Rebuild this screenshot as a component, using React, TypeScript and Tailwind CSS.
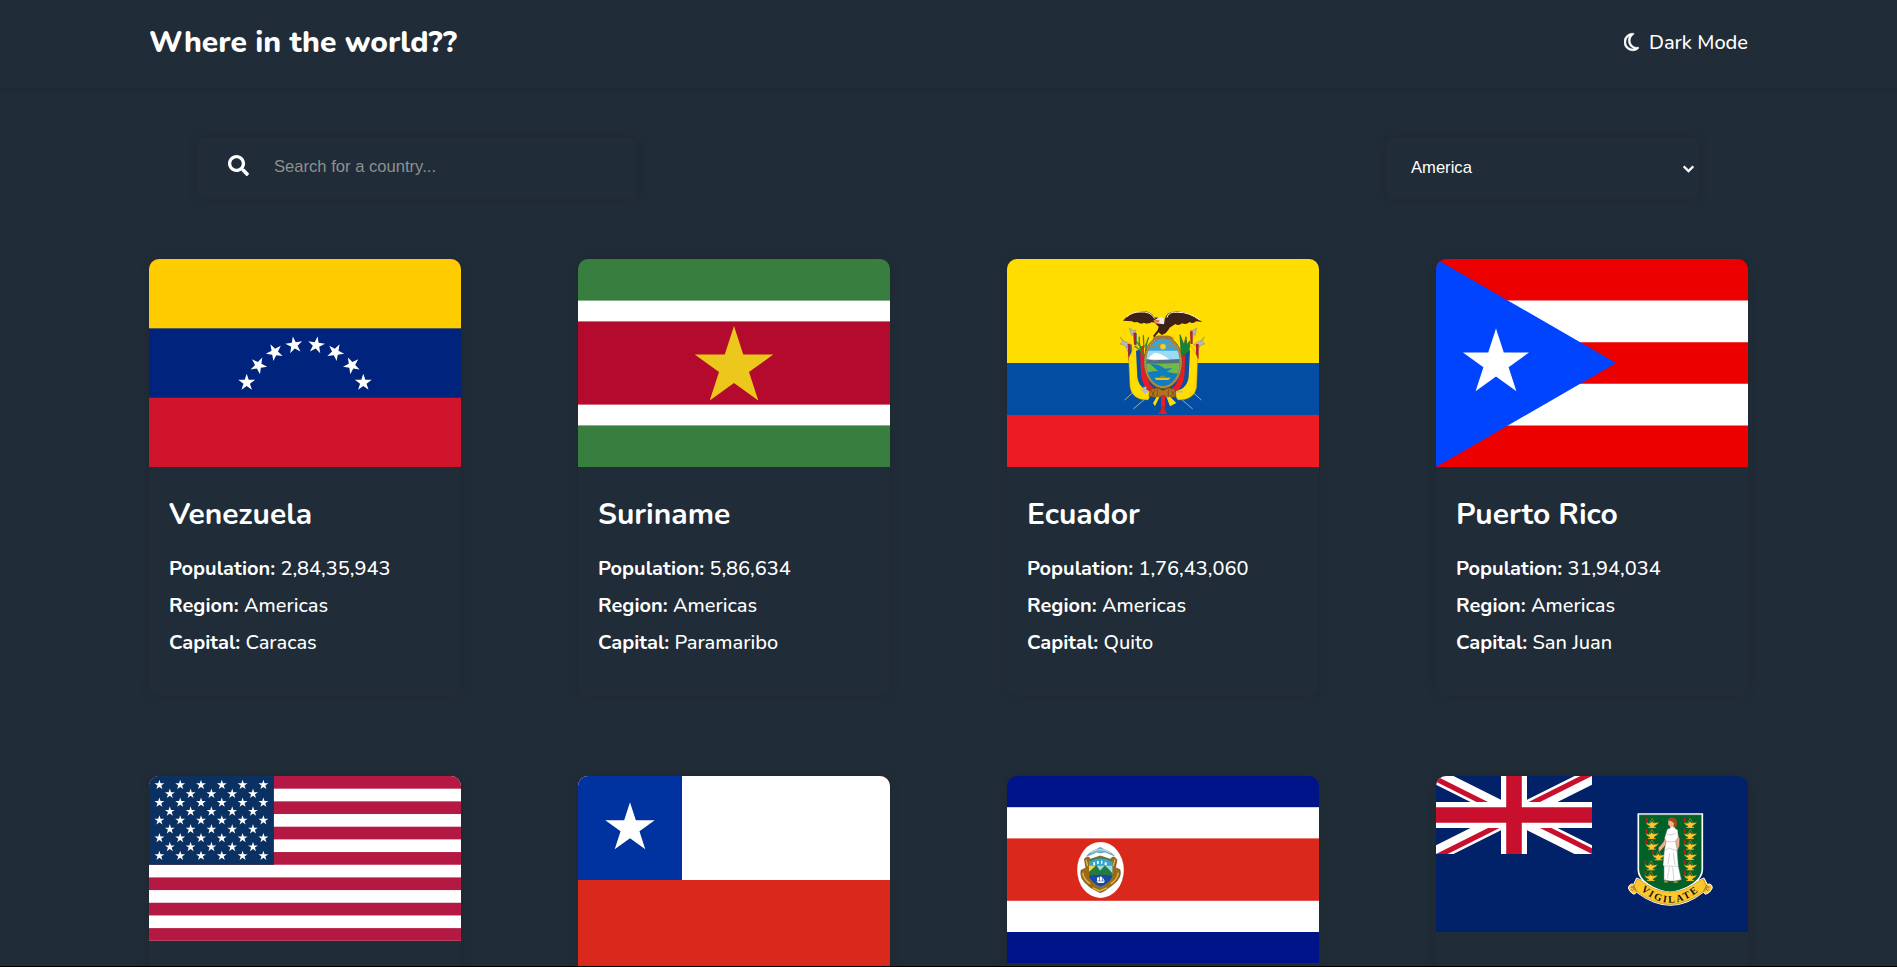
import type { ReactNode } from "react";
import { FaSearch } from "react-icons/fa";
import { FaRegMoon } from "react-icons/fa6";

const STAR_POINTS = Array.from({ length: 10 }, (_, i) => {
  const r = i % 2 === 0 ? 1 : 0.382;
  const a = (Math.PI / 5) * i;
  return `${(r * Math.sin(a)).toFixed(4)},${(-r * Math.cos(a)).toFixed(4)}`;
}).join(" ");

type StarProps = { x: number; y: number; r: number; rot?: number; fill?: string };

function Star({ x, y, r, rot = 0, fill = "#fff" }: StarProps) {
  return <polygon points={STAR_POINTS} fill={fill} transform={`translate(${x} ${y}) rotate(${rot}) scale(${r})`} />;
}

function Flag({ height, children }: { height: number; children: ReactNode }) {
  return (
    <svg className="block w-full rounded-t-[10px]" viewBox={`0 0 312 ${height}`} aria-hidden="true">
      {children}
    </svg>
  );
}

const VENEZUELA_STARS: [number, number, number][] = [
  [97.7, 123.6, 0],
  [109.4, 106.4, 26],
  [125.6, 93.2, -28],
  [145.2, 86.2, -9],
  [167.2, 86.2, 9],
  [186.4, 93.2, 28],
  [202.8, 106.4, -26],
  [214.3, 123.6, 0],
];

function Venezuela() {
  return (
    <Flag height={208}>
      <rect width="312" height="208" fill="#cf142b" />
      <rect width="312" height="138.67" fill="#00247d" />
      <rect width="312" height="69.33" fill="#fc0" />
      {VENEZUELA_STARS.map(([x, y, rot]) => (
        <Star key={x} x={x} y={y} r={8.9} rot={rot} />
      ))}
    </Flag>
  );
}

function Suriname() {
  return (
    <Flag height={208}>
      <rect width="312" height="208" fill="#377e3f" />
      <rect y="41.6" width="312" height="124.8" fill="#fff" />
      <rect y="62.4" width="312" height="83.2" fill="#b40a2d" />
      <Star x={156} y={108.2} r={41.3} fill="#ecc81d" />
    </Flag>
  );
}

function Ecuador() {
  return (
    <Flag height={208}>
      <rect width="312" height="208" fill="#ed1c24" />
      <rect width="312" height="156" fill="#034ea2" />
      <rect width="312" height="104" fill="#fd0" />
      <g transform="translate(83 31) scale(.3333)">
        <g stroke="#a9a9ad" strokeWidth="3" fill="none">
          <path d="M104 330L127 309M130 357L166 326M334 330L311 309M308 357L272 326" />
          <path d="M122 208L100 150M318 208L334 150M136 160L124 118M304 160L314 118" />
        </g>
        <g fill="#b4b6ba" stroke="#6b6d72" strokeWidth="1">
          <path d="M90 140l10 12 14 6 10 6-10 10-12-8-12-4 8-8zM343 140l-10 12-14 6-8 6 10 10 12-8 12-4-8-8zM118 114l12 8 8-2-2 12-12 4zM320 114l-12 8-6-2 2 12 12 4z" />
        </g>
        <path d="M113 162h8v46l-6 4zM318 162h8v46l-8-4zM130 128h8v36h-6zM300 124h8v38h-6z" fill="#b5202a" />
        <path d="M121 164h4v46l-6 2zM137 130h3v34h-4z" fill="#174b98" />
        <path d="M116 204L125 186Q131 164 150 166L158 240Q164 290 190 300L174 330Q126 330 120 290ZM323 204L315 186Q306 164 290 166L280 240Q274 290 246 300L264 330Q314 330 320 290Z" fill="#fd0" stroke="#ad9322" strokeWidth="1.5" />
        <path d="M138 182L158 176Q160 250 178 290L190 304Q148 302 142 262ZM300 182L278 176Q278 250 260 290L248 304Q290 302 296 262Z" fill="#0b50a0" />
        <path d="M150 170L162 166Q160 250 182 286L212 312H190Q158 298 153 250ZM286 170L276 166Q278 250 256 286L226 312H248Q280 298 284 250Z" fill="#ed1c24" />
        <g stroke="#3b8427" strokeWidth="4" fill="none">
          <path d="M166 202Q144 176 148 140M160 188L134 168M158 178L137 152M162 174L160 136M166 170L176 142M166 184L172 152" />
        </g>
        <path d="M274 200L270 134L282 164L288 140L291 164L300 152L297 184Z" fill="#14833c" stroke="#1f6428" strokeWidth="2" />
        <ellipse cx="219" cy="217" rx="58" ry="79" fill="#a77b38" stroke="#684a20" strokeWidth="2" />
        <ellipse cx="219" cy="217" rx="54" ry="75" fill="none" stroke="#dac391" strokeWidth="2" strokeDasharray="3 3" />
        <clipPath id="ecuador-oval"><ellipse cx="219" cy="217" rx="50" ry="71" /></clipPath>
        <g clipPath="url(#ecuador-oval)">
          <path d="M160 140h120v160H160z" fill="#37a4dd" />
          <path d="M160 182h120v35H160z" fill="#9bdcf4" />
          <path d="M174 208Q190 185 200 189Q215 191 239 209Z" fill="#fff" />
          <path d="M160 206L190 211L225 209L280 207V229H160Z" fill="#51717a" />
          <path d="M160 220L210 221L280 219V268H160Z" fill="#72b94a" />
          <path d="M180 221L206 225L226 236L248 234L230 245L252 250L280 251V300H160V250L190 244L204 243Z" fill="#127dbc" />
          <path d="M193 263H242L235 270H199Z" fill="#e7bd25" />
          <path d="M210 257h15v6h-15z" fill="#6a9e3a" />
          <path d="M183 174Q219 154 255 174" stroke="#b18b3a" strokeWidth="6" fill="none" strokeDasharray="7 3" />
          <circle cx="219" cy="170" r="9" fill="#efcf28" stroke="#a98f29" />
        </g>
        <path d="M187 146Q201 131 219 140Q238 130 252 147L236 149L219 143L202 150Z" fill="#a77434" />
        <path d="M189 138L203 120L206 110L196 100L186 96Q172 104 162 98Q151 104 143 96Q130 99 126 94L99 92Q118 67 148 65Q180 60 193 82L209 84L224 88Q231 64 252 65Q292 60 337 96L319 94Q308 103 299 96Q288 106 276 100Q266 109 256 102L239 113Q230 131 215 135L206 127L193 142Z" fill="#3d2117" />
        <path d="M110 81Q126 66 150 66Q182 63 194 86M231 83Q234 64 263 67Q298 66 329 90" stroke="#fff3d7" strokeWidth="3" fill="none" />
        <path d="M204 84Q216 78 224 88L222 103L210 101L194 99L191 92Z" fill="#eee7e2" />
        <path d="M191 91L208 89L208 97L192 99Z" fill="#dd7445" />
        <path d="M180 298L202 293L219 301L235 293L257 298V320L234 325L219 317L202 324L177 319Z" fill="#ae7422" stroke="#67420e" strokeWidth="2" />
        <path d="M183 300L195 322M195 298L185 320M202 295V323M235 297V323M243 300L254 318M255 300L242 322" stroke="#6e4514" strokeWidth="2" />
        <path d="M208 322L195 349L189 339L200 321ZM230 322L240 349L259 339L241 321Z" fill="#fd0" />
        <path d="M213 316h12l1 40 5 16h-25l7-16z" fill="#e51f2a" />
        <path d="M211 368l6-20M226 368l-5-20" stroke="#84232d" strokeWidth="2" />
        <path d="M149 296L160 300L160 290L170 290L169 300L179 304L165 312Z" fill="#b5b9c1" />
        <path d="M258 305h20" stroke="#b5b9c1" strokeWidth="5" />
        <path d="M226 82L248 30M239 75L259 33" stroke="#c2aa10" strokeWidth="1" strokeDasharray="3 4" />
      </g>
    </Flag>
  );
}

function PuertoRico() {
  return (
    <Flag height={208}>
      <rect width="312" height="208" fill="#ed0000" />
      <path d="M0 41.6h312v41.6H0zM0 124.8h312v41.6H0z" fill="#fff" />
      <path d="M0 0L180.1 104L0 208z" fill="#0044ff" />
      <Star x={60} y={104.2} r={34.7} />
    </Flag>
  );
}

function UnitedStates() {
  const h = 164.8;
  const stripe = h / 13;
  const rows = [0, 1, 2, 3, 4, 5, 6, 7, 8];
  return (
    <Flag height={h}>
      <rect width="312" height={h} fill="#fff" />
      {[0, 2, 4, 6, 8, 10, 12].map((i) => (
        <rect key={i} y={i * stripe} width="312" height={stripe} fill="#b31942" />
      ))}
      <rect width="124.9" height={stripe * 7} fill="#0a3161" />
      {rows.flatMap((row) =>
        Array.from({ length: row % 2 ? 5 : 6 }, (_, c) => (
          <Star key={`${row}-${c}`} x={10.4 + (row % 2 ? 10.4 : 0) + c * 20.8} y={8.9 + row * 8.87} r={5.2} />
        )),
      )}
    </Flag>
  );
}

function Chile() {
  return (
    <Flag height={208}>
      <rect width="312" height="208" fill="#da291c" />
      <rect width="312" height="104" fill="#fff" />
      <rect width="104" height="104" fill="#0032a0" />
      <Star x={52} y={52.2} r={26} />
    </Flag>
  );
}

function CostaRica() {
  return (
    <Flag height={187.2}>
      <rect width="312" height="187.2" fill="#001489" />
      <rect y="31.2" width="312" height="124.8" fill="#fff" />
      <rect y="62.4" width="312" height="62.4" fill="#da291c" />
      <g transform="translate(43 44) scale(.3333)">
        <ellipse cx="151.500" cy="150" rx="70" ry="84" fill="#fff" />
        <path d="M110 108Q125 91 138 89L151 82L163 89Q178 92 193 107L181 103L165 96L151 99L139 96L123 104Z" fill="#6fb5cf" stroke="#44798c" strokeWidth="1.5" />
        <path d="M122 98Q151 80 181 98" stroke="#b8dbe5" strokeWidth="4" fill="none" />
        <path d="M103 117Q116 105 121 118L151 108L181 118Q190 104 201 119L196 143L210 149Q216 173 190 193Q173 206 164 212L151 218L139 212Q119 203 112 194Q89 177 93 151L108 144Z" fill="#9b6b16" stroke="#694411" strokeWidth="2" />
        <path d="M98 158Q101 179 120 191M205 158Q202 180 182 191M108 120L113 138M195 119L189 138M128 204L149 213L171 204" stroke="#dbb55c" strokeWidth="4" fill="none" />
        <path d="M117 124Q151 102 187 124V160Q183 190 152 202Q120 189 117 160Z" fill="#36a5cd" />
        <path d="M119 123Q151 104 185 123" stroke="#337b3a" strokeWidth="3" fill="none" />
        <path d="M117 137h70v25h-70z" fill="#9cdcdd" />
        <path d="M117 138h18v19h-18z" fill="#f0d84b" />
        <path d="M117 163V155L131 143L139 135L150 152L164 137L174 145L187 160V172H117Z" fill="#237a42" />
        <path d="M117 168Q151 160 187 168Q181 190 152 200Q123 190 117 168Z" fill="#1b49a0" />
        <path d="M130 127h5v9h-5zM141 123h5v9h-5zM153 122h4v9h-4zM164 127h6v8h-6z" fill="#fff" />
        <path d="M139 184H165L160 189H144ZM141 182V173L148 171V182ZM150 182V169L157 172V182ZM159 182V174L164 182Z" fill="#fff" />
      </g>
    </Flag>
  );
}

function Lamp({ x, y }: { x: number; y: number }) {
  return (
    <g transform={`translate(${x} ${y})`}>
      <path d="M-8 3L2 -14L11 3" fill="none" stroke="#b68d1d" strokeWidth="2" />
      <path d="M-17 -3Q-10 4 -3 0L1 -5L5 0Q14 1 23 -4Q17 5 8 9V12H13V15H-10V12H-5V9Q-15 6 -17 -3Z" fill="#fdc92e" stroke="#8f6a13" strokeWidth="1" />
      <path d="M-15 -4Q-21 -10 -15 -17Q-10 -9 -13 -4Z" fill="#d51522" />
      <path d="M17 -3L28 -3" stroke="#243b1b" strokeWidth="1.500" />
    </g>
  );
}

const LAMPS: [number, number][] = [
  [695, 174], [694, 207], [694, 239], [714, 271], [691, 301], [691, 333],
  [809, 174], [809, 207], [809, 239], [809, 270], [809, 301], [809, 333],
];

function VirginIslands() {
  return (
    <Flag height={156}>
      <clipPath id="jack-area"><path d="M0 0h60v30H0z" /></clipPath>
      <clipPath id="jack-diagonals"><path d="M30 15h30v15zv15H0zH0V0zV0h30z" /></clipPath>
      <rect width="312" height="156" fill="#012169" />
      <g transform="scale(2.6)" clipPath="url(#jack-area)">
        <path d="M0 0L60 30M60 0L0 30" stroke="#fff" strokeWidth="6" />
        <path d="M0 0L60 30M60 0L0 30" stroke="#c8102e" strokeWidth="4" clipPath="url(#jack-diagonals)" />
        <path d="M30 0V30M0 15H60" stroke="#fff" strokeWidth="10" />
        <path d="M30 0V30M0 15H60" stroke="#c8102e" strokeWidth="6" />
      </g>
      <g transform="scale(.3333) translate(-48 -33)">
        <path d="M655 147H847V315Q845 358 751 389Q656 358 655 315Z" fill="#006129" stroke="#fff" strokeWidth="5" />
        <path d="M658 150H844" stroke="#777" strokeWidth="1.500" />
        {LAMPS.map(([x, y]) => (
          <Lamp key={`${x}-${y}`} x={x} y={y} />
        ))}
        <path d="M741 202L731 230L715 249L718 261L740 237ZM769 198L779 222L778 244L768 268H760L768 239L758 210Z" fill="#efb18f" stroke="#704834" strokeWidth="1" />
        <path d="M742 193L751 189V179L764 178L765 190L773 195L775 217L767 228L771 250L775 303L784 344L766 348L750 348L732 345L732 303L729 301L733 257L738 230L734 219Z" fill="#fff" stroke="#777" strokeWidth="1.500" />
        <path d="M741 207Q751 213 769 204M738 230H767M735 257L746 249L771 257M732 303L774 304M748 306L742 342M758 307L762 346M749 266L744 298M760 263L765 299" stroke="#a4a4a4" strokeWidth="1.500" fill="none" />
        <path d="M745 166Q754 159 764 166V184L751 186L745 178Z" fill="#efb18f" />
        <path d="M743 166Q747 155 761 158Q775 162 770 184L760 188L762 174Q753 166 743 166Z" fill="#9c4a16" />
        <path d="M731 352L737 343L745 353ZM759 353L768 346L775 353Z" fill="#b79522" />
        <path d="M665 344Q691 371 750 384Q811 370 837 344" stroke="#fff" strokeWidth="4" fill="none" />
        <path d="M650 339L663 345Q750 417 838 345L852 339L862 358Q876 354 877 369Q871 384 857 388L850 382Q752 460 650 382L642 388Q629 382 625 369Q629 354 641 358Z" fill="#ffc72c" stroke="#fff" strokeWidth="3" />
        <path d="M651 343L662 346Q750 416 839 346L850 343L862 371L850 380Q751 457 650 380L639 370Z" fill="#ffc72c" stroke="#6d5a20" strokeWidth="1" />
        <path d="M640 359L650 380M861 359L850 380M632 367q8-5 11 5q-4 8-10 2M869 367q-8-5-11 5q4 8 10 2" stroke="#6d5a20" strokeWidth="2" fill="none" />
        <path id="motto-arc" d="M657 371Q750 456 846 370" fill="none" />
        <text fontFamily="Liberation Serif, serif" fontWeight="700" fontSize="30" fill="#111">
          <textPath href="#motto-arc" startOffset="7" textLength="190" lengthAdjust="spacing">VIGILATE</textPath>
        </text>
      </g>
    </Flag>
  );
}

type Details = { name: string; population: string; capital: string };
type Country = { id: string; flag: ReactNode; details?: Details };

const COUNTRIES: Country[] = [
  { id: "ve", flag: <Venezuela />, details: { name: "Venezuela", population: "2,84,35,943", capital: "Caracas" } },
  { id: "sr", flag: <Suriname />, details: { name: "Suriname", population: "5,86,634", capital: "Paramaribo" } },
  { id: "ec", flag: <Ecuador />, details: { name: "Ecuador", population: "1,76,43,060", capital: "Quito" } },
  { id: "pr", flag: <PuertoRico />, details: { name: "Puerto Rico", population: "31,94,034", capital: "San Juan" } },
  { id: "us", flag: <UnitedStates /> },
  { id: "cl", flag: <Chile /> },
  { id: "cr", flag: <CostaRica /> },
  { id: "vg", flag: <VirginIslands /> },
];

function Fact({ label, value }: { label: string; value: string }) {
  return (
    <p className="h-[37px] whitespace-nowrap text-[20px] leading-[37px]">
      <b className="font-bold">{label}:</b> {value}
    </p>
  );
}

function CountryCard({ flag, details }: Country) {
  return (
    <article className="h-[437px] w-[312px] rounded-[10px] shadow-[0_0_10px_rgba(28,38,40,0.4)]">
      {flag}
      {details && (
        <div className="px-5 pt-[27px] font-medium">
          <h2 className="mb-[15px] h-[41px] text-[30px] font-bold leading-[41px]">{details.name}</h2>
          <Fact label="Population" value={details.population} />
          <Fact label="Region" value="Americas" />
          <Fact label="Capital" value={details.capital} />
        </div>
      )}
    </article>
  );
}

export default function App() {
  return (
    <div className="h-[967px] overflow-hidden border-b border-black bg-[#202c37] font-[Nunito,Lato,sans-serif] text-white">
      <header className="flex h-[88px] items-center justify-between px-[149px] pb-1 shadow-[0_1px_4px_rgba(28,38,40,0.55)]">
        <h1 className="text-[30px] font-extrabold">Where in the world??</h1>
        <button className="flex items-center gap-2.5 pt-0.5 text-[20px] font-medium">
          <FaRegMoon className="mb-0.5 h-5 w-[15px]" stroke="currentColor" strokeWidth={14} />
          Dark Mode
        </button>
      </header>
      <div className="flex justify-between px-[198px] pt-[50px] font-['Liberation_Sans',sans-serif] text-[16.6px]">
        <div className="flex h-[61px] w-[438px] items-center rounded-[5px] pl-[30px] shadow-[0_0_8px_rgba(28,38,40,0.5)]">
          <FaSearch className="mb-1.5 size-[21px]" />
          <span className="mb-0.5 ml-[25px] text-[#8f9090]">Search for a country...</span>
        </div>
        <div className="flex h-[61px] w-[313px] items-center justify-between rounded-[5px] pl-[25px] pr-[5px] shadow-[0_0_8px_rgba(28,38,40,0.5)]">
          <span>America</span>
          <svg className="w-[11px]" viewBox="0 0 11 8" fill="none" stroke="currentColor" strokeWidth="2.2" aria-hidden="true">
            <path d="M.7 1.300L5.500 6.100L10.300 1.300" />
          </svg>
        </div>
      </div>
      <main className="mt-[60px] grid grid-cols-4 gap-x-[117px] gap-y-20 px-[149px]">
        {COUNTRIES.map((c) => (
          <CountryCard key={c.id} {...c} />
        ))}
      </main>
    </div>
  );
}
